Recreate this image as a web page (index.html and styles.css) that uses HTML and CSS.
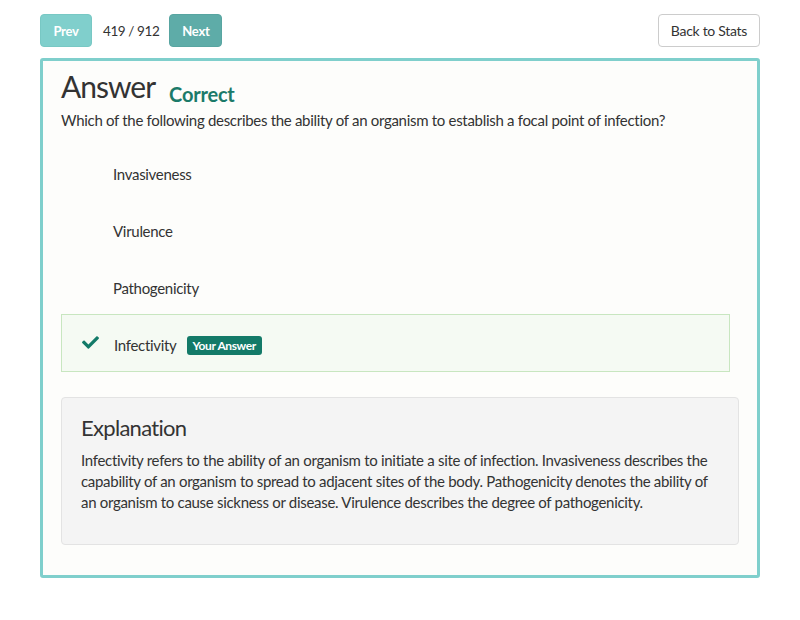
FILE: index.html
```html
<!DOCTYPE html>
<html>
<head>
<meta charset="utf-8">
<link rel="stylesheet" href="styles.css">
</head>
<body>
<div class="page">
  <div class="toolbar">
    <div class="pager">
      <button class="btn btn-prev">Prev</button>
      <span class="count">419 / 912</span>
      <button class="btn btn-next">Next</button>
    </div>
    <button class="btn btn-back">Back to Stats</button>
  </div>
  <div class="card">
    <div class="title">
      <span class="answer">Answer</span><span class="correct">Correct</span>
    </div>
    <p class="question">Which of the following describes the ability of an organism to establish a focal point of infection?</p>
    <div class="options">
      <div class="option"><span class="opt-text">Invasiveness</span></div>
      <div class="option"><span class="opt-text">Virulence</span></div>
      <div class="option"><span class="opt-text">Pathogenicity</span></div>
      <div class="option selected">
        <svg class="check" viewBox="0 0 512 512" width="21" height="17"><path d="M173.9 439.4l-166.4-166.4c-10-10-10-26.2 0-36.2l36.2-36.2c10-10 26.2-10 36.2 0L192 312.7 432.1 72.6c10-10 26.2-10 36.2 0l36.2 36.2c10 10 10 26.2 0 36.2l-294.4 294.4c-10 10-26.2 10-36.2 0z" fill="#137a68"/></svg>
        <span class="opt-text">Infectivity</span>
        <span class="badge">Your Answer</span>
      </div>
    </div>
    <div class="explanation">
      <h3>Explanation</h3>
      <p>Infectivity refers to the ability of an organism to initiate a site of infection. Invasiveness describes the capability of an organism to spread to adjacent sites of the body. Pathogenicity denotes the ability of an organism to cause sickness or disease. Virulence describes the degree of pathogenicity.</p>
    </div>
  </div>
</div>
</body>
</html>
```

FILE: styles.css
```css
* { box-sizing: border-box; }
body {
  margin: 0;
  background: #ffffff;
  font-family: Lato, "Open Sans", sans-serif;
  color: #333333;
  letter-spacing: -0.3px;
}
.page {
  width: 720px;
  margin: 0 0 0 40px;
  padding-top: 14px;
}
.toolbar {
  display: flex;
  justify-content: space-between;
  align-items: center;
}
.pager {
  display: flex;
  align-items: center;
}
.btn {
  font-family: Lato, "Open Sans", sans-serif;
  letter-spacing: -0.3px;
  height: 33px;
  border-radius: 4px;
  font-size: 14px;
  cursor: pointer;
  white-space: nowrap;
}
.btn-prev, .btn-next {
  color: #ffffff;
  font-weight: 700;
  font-size: 13px;
  border: 1px solid transparent;
  padding: 0;
}
.btn-prev { background: #80cfcc; border-color: #78c8c4; width: 52px; }
.btn-next { background: #5eaca8; border-color: #58a5a1; width: 53px; }
.count {
  font-size: 13.5px;
  letter-spacing: -0.4px;
  margin: 0 10px 0 11px;
  color: #333;
}
.btn-back {
  background: #ffffff;
  border: 1px solid #cccccc;
  color: #333333;
  padding: 0 12px;
}
.card {
  margin-top: 11px;
  border: 3px solid #7fcfcc;
  border-radius: 3px;
  background: #fdfdfb;
  padding: 12px 18px 30px 18px;
}
.title {
  display: flex;
  align-items: baseline;
  line-height: 26px;
}
.answer {
  font-size: 30px;
  letter-spacing: -1px;
  color: #333;
}
.correct {
  font-size: 20px;
  font-weight: 700;
  letter-spacing: -0.2px;
  color: #1b7a69;
  margin-left: 14px;
  position: relative;
  top: 4px;
}
.question {
  margin: 0;
  font-size: 15px;
  line-height: 21px;
  margin-top: 7px;
}
.options {
  margin-top: 12px;
  margin-right: 9px;
}
.option {
  display: flex;
  align-items: center;
  padding: 0 0 0 51px;
  height: 57px;
  font-size: 15px;
  border: 1px solid transparent;
}
.opt-text { position: relative; top: 2px; }
.option.selected {
  height: 58px;
  padding-left: 18px;
  background: #f5faf3;
  border-color: #c8e6c0;
}
.check {
  margin-right: 13px;
  margin-top: -2px;
}
.badge {
  background: #137a68;
  color: #ffffff;
  font-size: 12px;
  font-weight: 700;
  letter-spacing: -0.4px;
  line-height: 19px;
  padding: 0 6px;
  border-radius: 3px;
  margin-left: 10px;
  position: relative;
  top: 2px;
}
.explanation {
  margin-top: 25px;
  background: #f4f4f4;
  border: 1px solid #e3e3e3;
  border-radius: 4px;
  padding: 16px 19px 31px 19px;
}
.explanation h3 {
  margin: 0;
  font-size: 22px;
  font-weight: 400;
  letter-spacing: -0.7px;
  line-height: 27px;
}
.explanation p {
  margin: 9px 0 0 0;
  font-size: 15px;
  line-height: 21px;
}
```
